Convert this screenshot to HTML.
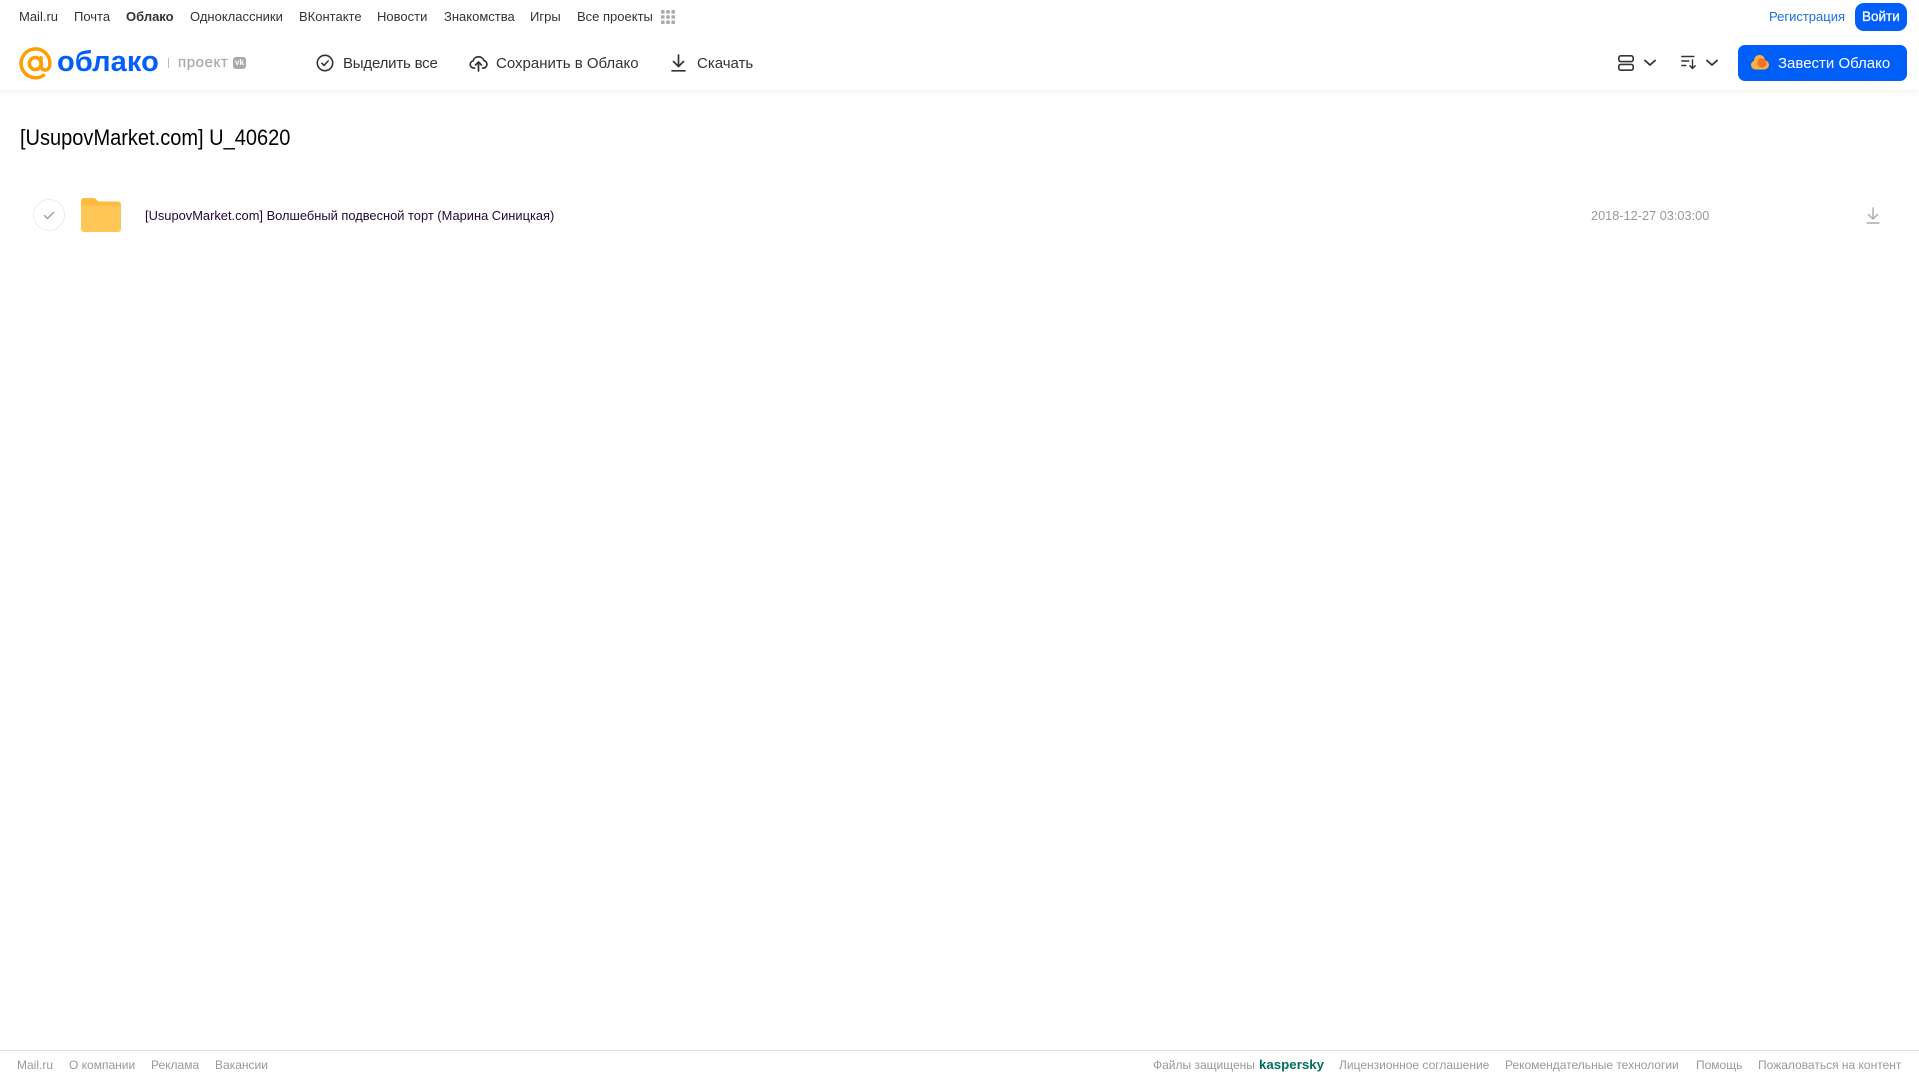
<!DOCTYPE html>
<html lang="ru">
<head>
<meta charset="utf-8">
<title>Облако</title>
<style>
html,body{margin:0;padding:0;background:#fff;}
body{position:relative;width:1919px;height:1079px;overflow:hidden;font-family:"Liberation Sans",Arial,sans-serif;}
.t{position:absolute;white-space:nowrap;line-height:18px;height:18px;transform-origin:0 50%;}
.n{top:8px;font-size:13px;color:#333;}
.b{top:55px;font-size:15px;color:#333;}
.f{top:1056px;font-size:12px;color:#999;}
.header{position:absolute;left:0;top:0;width:1919px;height:90px;background:#fff;box-shadow:0 2px 6px rgba(0,0,0,.05);}
svg{position:absolute;display:block;overflow:visible;}
.btn{position:absolute;background:#005ff9;}
</style>
</head>
<body>
<div class="header"></div>

<span class="t n" style="left:19px">Mail.ru</span>
<span class="t n" style="left:74px">Почта</span>
<span class="t n" style="left:126px;font-weight:bold">Облако</span>
<span class="t n" style="left:190px">Одноклассники</span>
<span class="t n" style="left:299px">ВКонтакте</span>
<span class="t n" style="left:377px">Новости</span>
<span class="t n" style="left:444px">Знакомства</span>
<span class="t n" style="left:530px">Игры</span>
<span class="t n" style="left:577px">Все проекты</span>
<svg style="left:661px;top:10px" width="14" height="14" viewBox="0 0 14 14" fill="#aaa">
<rect x="0" y="0" width="3.6" height="3.6" rx="1"/><rect x="5.2" y="0" width="3.6" height="3.6" rx="1"/><rect x="10.4" y="0" width="3.6" height="3.6" rx="1"/>
<rect x="0" y="5.2" width="3.6" height="3.6" rx="1"/><rect x="5.2" y="5.2" width="3.6" height="3.6" rx="1"/><rect x="10.4" y="5.2" width="3.6" height="3.6" rx="1"/>
<rect x="0" y="10.4" width="3.6" height="3.6" rx="1"/><rect x="5.2" y="10.4" width="3.6" height="3.6" rx="1"/><rect x="10.4" y="10.4" width="3.6" height="3.6" rx="1"/>
</svg>

<span class="t n" style="left:1769px;color:#1a6fe8">Регистрация</span>
<div class="btn" style="left:1855px;top:3px;width:52px;height:28px;border-radius:9px"></div>
<span class="t n" style="left:1862px;color:#fff;font-size:13.500px;-webkit-text-stroke:.3px #fff">Войти</span>

<!-- logo -->
<svg style="left:19px;top:47px" width="33" height="33" viewBox="0 0 33 33" fill="none" stroke="#ff9e00" stroke-width="3.500" stroke-linecap="round">
<path d="M24.500 28.300A14.400 14.400 0 1 1 30.900 16.500c0 4-1.800 6.500-4.700 6.500-2.700 0-4.200-2-4.200-4.700V10.800"/>
<circle cx="16.300" cy="16.500" r="6"/>
</svg>
<span style="position:absolute;left:57px;top:43px;font-size:29px;line-height:38px;font-weight:bold;color:#005ff9;white-space:nowrap;letter-spacing:.1px">облако</span>
<div style="position:absolute;left:168px;top:58px;width:1px;height:10px;background:#bbb"></div>
<span class="t" style="left:178px;top:54px;font-size:15px;color:#aaa;letter-spacing:.6px;-webkit-text-stroke:.25px #aaa">проект</span>
<div style="position:absolute;left:233px;top:57px;width:13px;height:12px;border-radius:3px;background:#aaa;color:#fff;font-size:8px;line-height:12px;text-align:center;font-weight:bold">vk</div>

<!-- toolbar -->
<svg style="left:316px;top:54px" width="18" height="18" viewBox="0 0 18 18" fill="none" stroke="#333" stroke-width="1.6" stroke-linecap="round" stroke-linejoin="round">
<circle cx="9" cy="9" r="7.700"/><path d="M5.800 9.200l2.200 2.200 4.200-4.400"/>
</svg>
<span class="t b" style="left:343px;letter-spacing:-.2px">Выделить все</span>

<svg style="left:469px;top:54px" width="19" height="18" viewBox="0 0 19 18" fill="none" stroke="#333" stroke-width="1.7" stroke-linecap="round" stroke-linejoin="round">
<path d="M5.500 14H4.600a3.600 3.600 0 0 1-.6-7.100 5.800 5.800 0 0 1 11-.3 3.800 3.800 0 0 1 0 7.400h-1.400"/><path d="M9.500 17V8.500M6.500 11l3-3 3 3"/>
</svg>
<span class="t b" style="left:496px">Сохранить в Облако</span>

<svg style="left:670px;top:54px" width="17" height="18" viewBox="0 0 17 18" fill="none" stroke="#333" stroke-width="1.7" stroke-linecap="round" stroke-linejoin="round">
<path d="M8.500 1v11M3.500 7.500l5 5 5-5M2 16.800h13"/>
</svg>
<span class="t b" style="left:697px">Скачать</span>

<!-- right toolbar -->
<svg style="left:1618px;top:55px" width="16" height="16" viewBox="0 0 16 16" fill="none" stroke="#333" stroke-width="1.6">
<rect x=".8" y=".8" width="14.400" height="5.800" rx="2"/><rect x=".8" y="9.400" width="14.400" height="5.800" rx="2"/>
</svg>
<svg style="left:1644px;top:59px" width="12" height="8" viewBox="0 0 12 8" fill="none" stroke="#333" stroke-width="1.8" stroke-linecap="round" stroke-linejoin="round"><path d="M1 1.500l5 4.500 5-4.500"/></svg>
<svg style="left:1681px;top:55px" width="16" height="15" viewBox="0 0 16 15" fill="none" stroke="#333" stroke-width="1.4" stroke-linecap="round" stroke-linejoin="round">
<path d="M.8 1.500h12M.8 6h7M.8 10.500h4M11.500 5v8.500M8.800 10.800l2.700 2.700 2.700-2.700"/>
</svg>
<svg style="left:1706px;top:59px" width="12" height="8" viewBox="0 0 12 8" fill="none" stroke="#333" stroke-width="1.8" stroke-linecap="round" stroke-linejoin="round"><path d="M1 1.500l5 4.500 5-4.500"/></svg>

<div class="btn" style="left:1738px;top:45px;width:169px;height:36px;border-radius:7px"></div>
<svg style="left:1751px;top:55px" width="18" height="15" viewBox="0 0 18 15">
<g fill="#ffb13d"><circle cx="4.500" cy="10" r="4.500"/><circle cx="8.500" cy="5.500" r="5.500"/><circle cx="13.500" cy="9.800" r="4.500"/><rect x="4" y="8" width="10" height="6.500"/></g>
<circle cx="11" cy="8" r="4.600" fill="#f4712a"/>
</svg>
<span class="t b" style="left:1778px;color:#fff">Завести Облако</span>

<!-- title -->
<span class="t" style="left:20px;top:125px;height:26px;line-height:26px;font-size:22px;color:#000;transform:scaleX(.91)">[UsupovMarket.com] U_40620</span>

<!-- row -->
<svg style="left:33px;top:199px" width="32" height="32" viewBox="0 0 32 32" fill="none">
<circle cx="16" cy="16" r="15.500" stroke="#ececec"/>
<path d="M11.500 16.500l3 3 6-6" stroke="#a0a0a0" stroke-width="1.500" stroke-linecap="round" stroke-linejoin="round"/>
</svg>
<svg style="left:81px;top:198px" width="40" height="34" viewBox="0 0 40 34">
<path d="M3 0h9c2 0 3 .8 3.800 2 .6 1 1.400 1.500 3 1.500H37a3 3 0 0 1 3 3V20H0V3a3 3 0 0 1 3-3z" fill="#ffb840"/>
<path d="M0 9.500a2 2 0 0 1 2-2h36a2 2 0 0 1 2 2V31a3 3 0 0 1-3 3H3a3 3 0 0 1-3-3z" fill="#ffc555"/>
</svg>
<span class="t" style="left:145px;top:207px;font-size:13px;color:#1f0a33;transform:scaleX(.99)">[UsupovMarket.com] Волшебный подвесной торт (Марина Синицкая)</span>
<span class="t" style="left:1591px;top:207px;font-size:13px;color:#999;transform:scaleX(.98)">2018-12-27 03:03:00</span>
<svg style="left:1866px;top:207px" width="14" height="17" viewBox="0 0 14 17" fill="none" stroke="#aaa" stroke-width="1.4" stroke-linecap="round" stroke-linejoin="round">
<path d="M7 1v10.500M2.500 7.500L7 12l4.500-4.500M1 16h12"/>
</svg>

<!-- footer -->
<div style="position:absolute;left:0;top:1050px;width:1919px;height:1px;background:#ddd"></div>
<span class="t f" style="left:17px">Mail.ru</span>
<span class="t f" style="left:69px">О компании</span>
<span class="t f" style="left:151px">Реклама</span>
<span class="t f" style="left:215px">Вакансии</span>
<span class="t f" style="left:1153px">Файлы защищены</span>
<span class="t f" style="left:1259px;font-size:13.300px;font-weight:bold;color:#00705f">kaspersky</span>
<span class="t f" style="left:1339px">Лицензионное соглашение</span>
<span class="t f" style="left:1505px">Рекомендательные технологии</span>
<span class="t f" style="left:1696px">Помощь</span>
<span class="t f" style="left:1758px">Пожаловаться на контент</span>
</body>
</html>
